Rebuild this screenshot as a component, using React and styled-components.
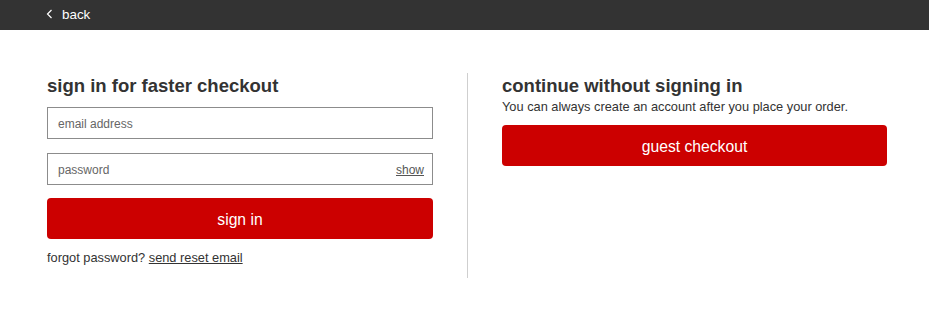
import React from "react";
import styled, { createGlobalStyle } from "styled-components";

const Global = createGlobalStyle`
  html, body { margin: 0; padding: 0; background: #fff; }
  body { font-family: "Liberation Sans", Arial, sans-serif; color: #333; }
  * { box-sizing: border-box; }
`;

const TopBar = styled.header`
  height: 30px;
  background: #333;
  display: flex;
  align-items: center;
  padding-left: 46px;
`;

const BackLink = styled.a`
  display: flex;
  align-items: center;
  gap: 9px;
  color: #fff;
  font-size: 13.4px;
  text-decoration: none;
  margin-top: -2px;
`;

const Main = styled.main`
  display: flex;
  align-items: stretch;
  padding: 43px 0 0 47px;
`;

const Column = styled.section`
  width: ${(p) => p.$w}px;
`;

const Divider = styled.div`
  width: 1px;
  height: 205px;
  background: #cfcfcf;
  margin: 0 34px;
`;

const Heading = styled.h2`
  margin: 0;
  font-size: 18.5px;
  font-weight: 700;
  color: #333;
  line-height: 24px;
  margin-top: 1px;
`;

const Sub = styled.p`
  margin: 0;
  font-size: 12.8px;
  color: #333;
  line-height: 16px;
  margin-top: 1px;
`;

const Field = styled.div`
  height: 32px;
  border: 1px solid #8c8c8c;
  display: flex;
  align-items: center;
  justify-content: space-between;
  padding: 2px 8px 0 10px;
  margin-top: ${(p) => p.$mt}px;
  font-size: 12px;
  color: #666;
`;

const ShowLink = styled.span`
  color: #555;
  text-decoration: underline;
  font-size: 12px;
`;

const RedButton = styled.button`
  display: block;
  width: 100%;
  height: 41px;
  padding: 2px 0 0;
  margin-top: ${(p) => p.$mt}px;
  background: #cc0000;
  color: #fff;
  border: none;
  border-radius: 4px;
  font-family: inherit;
  font-size: 15.7px;
`;

const Forgot = styled.p`
  margin: 12px 0 0;
  font-size: 12.8px;
  color: #333;
  line-height: 14px;
`;

const Underline = styled.a`
  color: #333;
  text-decoration: underline;
`;

const Chevron = () => (
  <svg width="7" height="10" viewBox="0 0 7 10" fill="none">
    <path d="M5.5 1 L1.5 5 L5.5 9" stroke="#fff" strokeWidth="1.2" />
  </svg>
);

export default function App() {
  return (
    <>
      <Global />
      <TopBar>
        <BackLink>
          <Chevron />
          back
        </BackLink>
      </TopBar>
      <Main>
        <Column $w={386}>
          <Heading>sign in for faster checkout</Heading>
          <Field $mt={9}>email address</Field>
          <Field $mt={14}>
            password
            <ShowLink>show</ShowLink>
          </Field>
          <RedButton $mt={13}>sign in</RedButton>
          <Forgot>
            forgot password? <Underline>send reset email</Underline>
          </Forgot>
        </Column>
        <Divider />
        <Column $w={385}>
          <Heading>continue without signing in</Heading>
          <Sub>You can always create an account after you place your order.</Sub>
          <RedButton $mt={10}>guest checkout</RedButton>
        </Column>
      </Main>
    </>
  );
}
